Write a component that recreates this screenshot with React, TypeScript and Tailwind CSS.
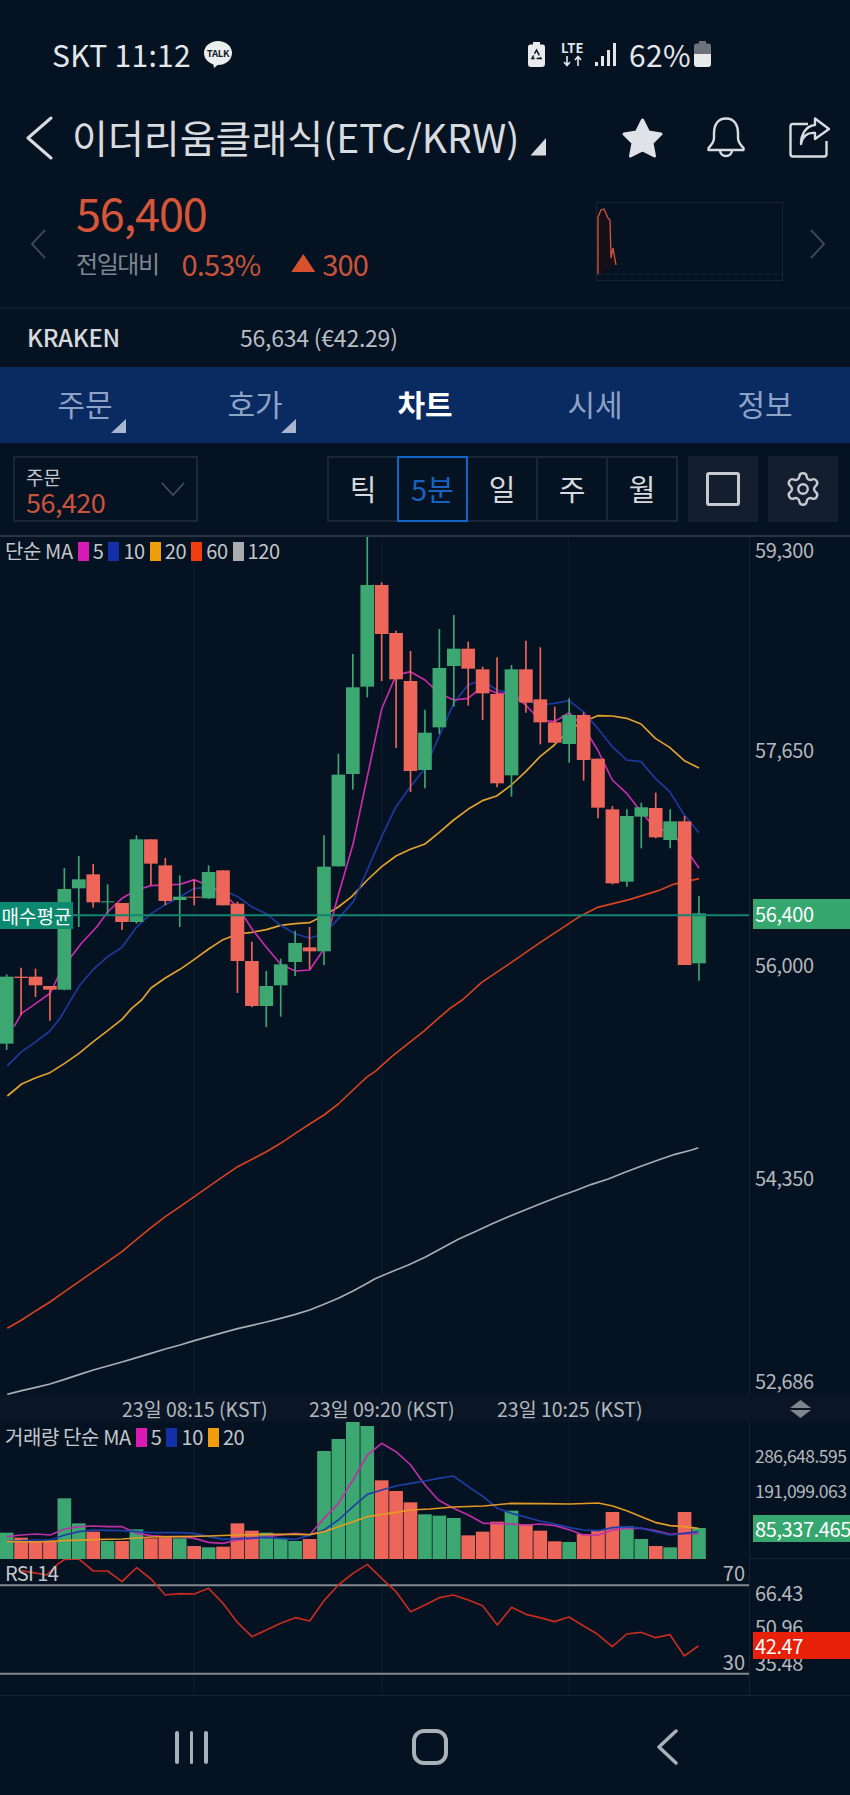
import { Settings } from "lucide-react";

const GREEN = "#3ca770";
const RED = "#ee6559";
const STEP = 43.27;

type Candle = [up: 0 | 1, top: number, bottom: number, high: number, low: number];

// chart units are 3 per pixel
const candles: Candle[] = [
  [1, 1340, 1541, 1333, 1560],
  [0, 1340, 1344, 1313, 1455],
  [0, 1340, 1366, 1316, 1401],
  [0, 1368, 1379, 1368, 1472],
  [1, 1077, 1379, 1014, 1381],
  [1, 1048, 1075, 978, 1191],
  [0, 1033, 1117, 1002, 1133],
  [1, 1114, 1117, 1063, 1151],
  [0, 1119, 1176, 1119, 1200],
  [1, 928, 1176, 916, 1181],
  [0, 928, 1001, 928, 1065],
  [0, 1006, 1113, 984, 1126],
  [1, 1100, 1110, 1036, 1191],
  [0, 1100, 1103, 1049, 1126],
  [1, 1026, 1105, 1006, 1107],
  [0, 1021, 1126, 1021, 1126],
  [0, 1121, 1293, 1115, 1389],
  [0, 1293, 1428, 1235, 1432],
  [1, 1368, 1428, 1323, 1491],
  [1, 1303, 1366, 1286, 1460],
  [1, 1239, 1296, 1202, 1338],
  [0, 1252, 1264, 1191, 1318],
  [1, 1010, 1264, 916, 1305],
  [1, 734, 1009, 671, 1010],
  [1, 472, 732, 372, 779],
  [1, 165, 470, 21, 502],
  [0, 165, 312, 157, 453],
  [0, 309, 448, 302, 654],
  [0, 453, 723, 363, 786],
  [1, 608, 720, 539, 775],
  [1, 414, 592, 297, 612],
  [1, 356, 408, 255, 530],
  [0, 356, 416, 335, 527],
  [0, 418, 490, 410, 570],
  [0, 492, 760, 382, 772],
  [1, 418, 736, 405, 800],
  [0, 418, 518, 332, 548],
  [0, 508, 577, 352, 643],
  [0, 577, 638, 530, 640],
  [1, 555, 642, 505, 698],
  [0, 555, 690, 547, 752],
  [0, 686, 833, 686, 865],
  [0, 838, 1060, 828, 1063],
  [1, 858, 1055, 838, 1070],
  [1, 832, 860, 818, 955],
  [0, 834, 922, 788, 925],
  [1, 874, 930, 838, 955],
  [0, 874, 1305, 858, 1305],
  [1, 1150, 1300, 1098, 1352],
];

const ma5 =
  "42,1490 65,1450 108,1420 151,1389 180,1328 215,1278 245,1239 290,1191 323,1146 366,1105 410,1080 453,1067 496,1065 540,1063 583,1049 626,1067 669,1090 713,1131 756,1197 799,1252 842,1303 886,1323 929,1320 972,1257 1015,1095 1059,943 1102,740 1145,537 1188,436 1231,425 1275,450 1317,490 1361,510 1404,505 1447,470 1490,490 1534,490 1577,525 1620,570 1663,575 1707,548 1750,590 1793,660 1837,750 1880,790 1923,845 1966,895 2009,905 2053,950 2097,1015";
const ma10 =
  "22,1607 65,1565 108,1535 150,1503 180,1465 237,1369 280,1318 323,1280 366,1252 410,1191 453,1151 496,1124 540,1100 583,1075 626,1073 669,1080 713,1100 756,1131 799,1151 842,1186 886,1212 929,1224 972,1212 1015,1166 1060,1115 1102,1020 1145,920 1188,830 1231,770 1275,715 1317,620 1361,520 1404,465 1447,450 1490,480 1534,490 1577,510 1620,525 1663,520 1707,512 1750,545 1793,595 1837,650 1880,690 1923,695 1966,745 2009,785 2053,855 2097,908";
const ma20 =
  "22,1698 65,1662 108,1643 150,1628 194,1600 237,1570 280,1535 323,1502 366,1468 395,1435 425,1410 453,1374 496,1344 540,1318 583,1288 626,1257 669,1229 713,1212 756,1207 799,1199 842,1186 886,1181 929,1178 972,1156 1015,1131 1055,1100 1102,1050 1145,1010 1188,978 1231,958 1275,942 1317,908 1361,870 1404,838 1447,812 1490,798 1534,765 1577,725 1620,680 1663,645 1707,600 1750,575 1793,557 1837,558 1880,565 1923,582 1966,625 2009,652 2053,692 2097,714";
const ma60 =
  "22,2395 65,2370 108,2342 150,2316 194,2285 237,2255 280,2225 323,2195 366,2165 410,2128 453,2093 496,2060 540,2030 583,2000 626,1970 669,1940 713,1910 756,1888 799,1865 842,1840 886,1810 929,1782 972,1755 1015,1722 1059,1680 1102,1640 1125,1625 1175,1580 1225,1540 1270,1505 1315,1465 1350,1435 1387,1410 1445,1357 1530,1300 1620,1238 1735,1162 1790,1133 1890,1108 1975,1082 2020,1063 2097,1046";
const ma120 =
  "22,2593 65,2582 108,2572 150,2562 194,2548 237,2534 280,2520 323,2508 366,2496 410,2483 453,2470 496,2457 540,2445 583,2432 626,2420 669,2408 713,2396 756,2386 799,2376 842,2365 886,2353 929,2340 972,2323 1015,2305 1059,2283 1102,2260 1125,2246 1175,2225 1225,2205 1275,2182 1325,2155 1375,2128 1425,2105 1475,2082 1525,2060 1575,2040 1625,2020 1675,2000 1725,1982 1775,1963 1825,1947 1875,1927 1925,1908 1975,1890 2025,1873 2075,1860 2095,1853";

const volumes: [0 | 1, number][] = [
  [1, 458], [0, 473], [0, 483], [0, 483], [1, 355], [1, 430], [0, 455], [1, 483], [0, 483], [1, 448],
  [0, 475], [0, 473], [1, 475], [0, 498], [1, 502], [0, 500], [0, 430], [0, 452], [1, 458], [1, 475],
  [1, 483], [0, 477], [1, 213], [1, 177], [1, 126], [1, 138], [0, 301], [0, 333], [0, 367], [1, 403],
  [1, 407], [1, 414], [0, 466], [0, 455], [0, 425], [1, 392], [0, 432], [0, 452], [0, 484], [1, 486],
  [0, 462], [0, 450], [0, 396], [1, 438], [1, 477], [0, 498], [1, 502], [0, 396], [1, 444],
];

const volMa5 =
  "20,470 64,465 108,462 151,465 194,447 237,440 280,438 323,440 366,440 410,460 453,467 496,470 540,470 583,475 626,487 669,490 713,480 756,476 799,470 842,465 886,460 929,465 972,415 1015,370 1059,300 1102,225 1145,190 1188,215 1232,255 1275,315 1315,360 1360,385 1405,405 1450,430 1492,430 1535,432 1580,435 1620,432 1665,437 1710,450 1750,465 1795,465 1838,450 1880,445 1925,445 1965,452 2010,463 2053,460 2095,462";
const volMa10 =
  "20,483 64,482 108,480 151,480 194,465 237,455 280,450 323,451 366,452 410,455 453,458 496,458 540,458 583,460 626,470 669,478 713,476 756,474 799,472 842,475 886,478 929,466 972,450 1015,420 1059,380 1102,343 1145,330 1188,318 1232,310 1275,303 1315,295 1360,288 1405,320 1450,350 1492,385 1535,400 1580,412 1620,423 1665,432 1710,443 1750,450 1795,452 1838,443 1880,440 1925,445 1965,455 2010,465 2053,460 2095,455";
const volMa20 =
  "20,484 108,486 194,482 280,479 366,477 453,471 540,470 626,468 713,465 799,463 886,463 929,464 972,455 1059,425 1102,410 1188,397 1232,390 1290,387 1360,381 1450,378 1535,370 1620,371 1710,372 1795,369 1838,378 1880,392 1965,427 2010,437 2053,440 2095,445";

const rsi =
  "64,572 100,578 140,585 170,555 194,538 237,537 280,573 323,573 366,605 410,563 453,597 496,645 540,641 583,642 626,625 669,670 713,728 756,770 799,750 842,730 886,713 929,723 972,662 1015,615 1059,580 1102,553 1145,595 1188,635 1232,695 1275,675 1318,653 1360,645 1405,660 1448,677 1492,735 1535,682 1578,703 1620,713 1663,725 1707,711 1750,737 1793,763 1837,800 1880,762 1923,757 1967,773 2010,764 2053,828 2095,798";

const gridX = [582, 1146, 1707];

function Line({ points, color, width = 5 }: { points: string; color: string; width?: number }) {
  return <polyline points={points} fill="none" stroke={color} strokeWidth={width} strokeLinejoin="round" />;
}

function Grid({ y1, y2 }: { y1: number; y2: number }) {
  return (
    <>
      {gridX.map((x) => (
        <line key={x} x1={x} x2={x} y1={y1} y2={y2} stroke="#0f1c2d" strokeWidth={3} />
      ))}
    </>
  );
}

function PriceChart() {
  return (
    <svg width={749} height={858} viewBox="0 21 2247 2574" className="block">
      <Grid y1={21} y2={2595} />
      <Line points={ma120} color="#a9adb2" />
      <Line points={ma60} color="#d8431f" />
      <Line points={ma20} color="#e2a32e" />
      <Line points={ma10} color="#1c3aa0" />
      <Line points={ma5} color="#cc2bae" />
      {candles.map(([up, top, bottom, high, low], i) => {
        const x = 20 + STEP * i;
        const color = up ? GREEN : RED;
        return (
          <g key={i}>
            <line x1={x} x2={x} y1={high} y2={low} stroke={color} strokeWidth={5} />
            <rect x={x - 20.5} y={top} width={41} height={bottom - top} fill={color} />
          </g>
        );
      })}
      <line x1={0} x2={2247} y1={1156} y2={1156} stroke="#128470" strokeWidth={6} />
    </svg>
  );
}

function VolumeChart() {
  return (
    <svg width={749} height={137} viewBox="0 126 2247 411" className="block">
      <Grid y1={126} y2={537} />
      {volumes.map(([up, top], i) => (
        <rect key={i} x={20 + STEP * i - 20.5} y={top} width={41} height={537 - top} fill={up ? GREEN : RED} />
      ))}
      <Line points={volMa5} color="#bd2fa8" width={5} />
      <Line points={volMa10} color="#1c3fa8" width={5} />
      <Line points={volMa20} color="#e39a24" width={5} />
    </svg>
  );
}

function RsiChart() {
  return (
    <svg width={749} height={136} viewBox="0 537 2247 408" className="block">
      <Grid y1={537} y2={945} />
      <line x1={0} x2={2247} y1={616} y2={616} stroke="#85898f" strokeWidth={6} />
      <line x1={0} x2={2247} y1={881} y2={881} stroke="#85898f" strokeWidth={6} />
      <Line points={rsi} color="#c62c1f" width={5} />
    </svg>
  );
}

function Legend({ title, items }: { title: string; items: [string, string][] }) {
  return (
    <div className="flex items-center text-[20px] leading-[20px] tracking-[-0.02em] text-[#c3c7cc]">
      <span>{title}</span>
      {items.map(([color, label]) => (
        <span key={label} className="flex items-center">
          <span className="ml-[5px] h-[19px] w-[11px]" style={{ backgroundColor: color }} />
          <span className="ml-[4px]">{label}</span>
        </span>
      ))}
    </div>
  );
}

function AxisLabel({ y, children }: { y: number; children: string }) {
  return (
    <span
      className="absolute left-[5px] -translate-y-1/2 text-[20px] leading-none tracking-[-0.02em] text-[#b4b8be]"
      style={{ top: y }}
    >
      {children}
    </span>
  );
}

function StatusBar() {
  return (
    <div className="flex h-[90px] items-center pl-[52px] pt-[18px] text-[30px] leading-none tracking-[0.01em] text-[#e4e6e9]">
      <span>SKT 11:12</span>
      <svg width={28} height={27} viewBox="0 0 28 27" className="ml-[13px]">
        <ellipse cx={14} cy={12} rx={14} ry={12} fill="#eceded" />
        <path d="M9 21 L10 27 L16 22 Z" fill="#eceded" />
        <text x={14} y={15.5} textAnchor="middle" fontSize={9.5} fontWeight={700} letterSpacing={-0.3} fill="#111b28">
          TALK
        </text>
      </svg>
      <svg width={17} height={25} viewBox="0 0 17 25" className="ml-[296px]">
        <path d="M5 0 H12 V2.5 H14.5 Q17 2.5 17 5 V22 Q17 25 14 25 H3 Q0 25 0 22 V5 Q0 2.5 2.5 2.5 H5 Z" fill="#e8eaec" />
        <polygon points="8.5,8 13,16.5 4,16.5" fill="none" stroke="#0b1522" strokeWidth={1.5} strokeDasharray="6 2" />
      </svg>
      <svg width={25} height={25} viewBox="0 0 25 25" className="ml-[15px]">
        <text x={12.5} y={11} textAnchor="middle" fontSize={13} fontWeight={700} fill="#e4e6e9">
          LTE
        </text>
        <path d="M7 14 V23 M4 20 L7 23.5 L10 20 M18 24 V15 M15 18 L18 14.5 L21 18" fill="none" stroke="#e4e6e9" strokeWidth={1.6} />
      </svg>
      <svg width={22} height={23} viewBox="0 0 22 23" className="ml-[10px]">
        <rect x={0} y={19} width={3} height={4} fill="#e4e6e9" />
        <rect x={6} y={13} width={3} height={10} fill="#e4e6e9" />
        <rect x={12} y={7} width={3} height={16} fill="#e4e6e9" />
        <rect x={18} y={0} width={3} height={23} fill="#e4e6e9" />
      </svg>
      <span className="ml-[12px]">62%</span>
      <svg width={17} height={26} viewBox="0 0 17 26" className="ml-[3px]">
        <path d="M5 0 H12 V2.5 H14.5 Q17 2.5 17 5 V13 H0 V5 Q0 2.5 2.5 2.5 H5 Z" fill="#6b727b" />
        <path d="M0 13 H17 V23 Q17 26 14 26 H3 Q0 26 0 23 Z" fill="#e8eaec" />
      </svg>
    </div>
  );
}

function TitleBar() {
  return (
    <div className="flex h-[95px] items-center text-[#d8dbdf]">
      <svg width={30} height={44} viewBox="0 0 30 44" className="ml-[25px]">
        <path d="M26 2 L3 22 L26 42" fill="none" stroke="currentColor" strokeWidth={3} strokeLinecap="round" strokeLinejoin="round" />
      </svg>
      <h1 className="ml-[17px] -translate-y-[1px] whitespace-nowrap text-[39px] font-normal leading-none">이더리움클래식(ETC/KRW)</h1>
      <span className="ml-[11px] mt-[18px] h-[18px] w-[16px] bg-[#d8dbdf] [clip-path:polygon(100%_0,100%_100%,0_100%)]" />
      <svg width={44} height={42} viewBox="0 0 44 42" className="ml-[75px]">
        <polygon
          points="21.5,3 27.5,15 40,17 31,26 33.5,39 21.5,33 9.5,39 12,26 3,17 15.5,15"
          fill="#dfe2e6"
          stroke="#dfe2e6"
          strokeWidth={3}
          strokeLinejoin="round"
        />
      </svg>
      <svg width={38} height={42} viewBox="0 0 38 42" className="ml-[42px]">
        <path
          d="M19 1.5 C10 1.5 7 9 7 16 V21 C7 26 3 29 1.5 31 V33 H36.5 V31 C35 29 31 26 31 21 V16 C31 9 28 1.5 19 1.5 Z M13 33 C13 41 25 41 25 33"
          fill="none"
          stroke="currentColor"
          strokeWidth={2.4}
          strokeLinejoin="round"
        />
      </svg>
      <svg width={42} height={41} viewBox="0 0 42 41" className="ml-[44px]">
        <path
          d="M19 7 H4 Q1.5 7 1.5 9.5 V37 Q1.5 39.5 4 39.5 H35 Q37.5 39.5 37.5 37 V24 M26 1.5 L40 12 L26 22 V16 C18 15 13 20 12 27 C12 17 17 9 26 8 Z"
          fill="none"
          stroke="currentColor"
          strokeWidth={2.4}
          strokeLinejoin="round"
        />
      </svg>
    </div>
  );
}

function PriceSummary() {
  return (
    <div className="flex h-[124px] items-start border-b-2 border-[#111e2f]">
      <svg width={16} height={30} viewBox="0 0 16 30" className="ml-[30px] mt-[44px]">
        <path d="M15 1 L2 15 L15 29" fill="none" stroke="#3a4656" strokeWidth={2} />
      </svg>
      <div className="ml-[30px] flex w-[520px] flex-col">
        <span className="mt-[1px] text-[45px] leading-[52px] tracking-[-0.025em] text-[#d7563a]">56,400</span>
        <div className="mt-[10px] flex items-center leading-[30px]">
          <span className="text-[24px] tracking-[-0.06em] text-[#7d8793]">전일대비</span>
          <span className="ml-[23px] text-[29px] tracking-[-0.03em] text-[#c9543b]">0.53%</span>
          <span className="ml-[31px] h-[18px] w-[24px] bg-[#d9502f] [clip-path:polygon(50%_0,100%_100%,0_100%)]" />
          <span className="ml-[7px] text-[29px] tracking-[-0.03em] text-[#c9543b]">300</span>
        </div>
      </div>
      <div className="mt-[17px] h-[79px] w-[187px] border border-[#172232]">
        <svg width={185} height={77} viewBox="0 0 185 77" className="block">
          <path d="M0 71.5 H185" stroke="#1d2a3a" strokeWidth={1} strokeDasharray="4 4" />
          <path d="M1 71 L1 14 L4 7 L7 6 L11 15 L13 17 L14 55 L16 45 L19 62" fill="#160f18" stroke="#d7563a" strokeWidth={1.3} />
        </svg>
      </div>
      <svg width={16} height={30} viewBox="0 0 16 30" className="ml-[27px] mt-[44px]">
        <path d="M1 1 L14 15 L1 29" fill="none" stroke="#3a4656" strokeWidth={2} />
      </svg>
    </div>
  );
}

function Tabs() {
  const tabs = [
    { label: "주문", corner: true },
    { label: "호가", corner: true },
    { label: "차트", active: true },
    { label: "시세" },
    { label: "정보" },
  ];
  return (
    <nav className="grid h-[76px] grid-cols-5 bg-[#0a2a62]">
      {tabs.map((tab) => (
        <div key={tab.label} className="relative flex items-center justify-center pb-[4px]">
          <span className={tab.active ? "text-[30px] font-bold text-white" : "text-[30px] text-[#8ea2c6]"}>{tab.label}</span>
          {tab.corner && (
            <span className="absolute left-[111px] top-[52px] h-[14px] w-[15px] bg-[#a9b6cf] [clip-path:polygon(100%_0,100%_100%,0_100%)]" />
          )}
        </div>
      ))}
    </nav>
  );
}

function Toolbar() {
  const ranges = ["틱", "5분", "일", "주", "월"];
  return (
    <div className="flex h-[92px] items-center pl-[13px]">
      <div className="flex h-[66px] w-[185px] items-center justify-between border-2 border-[#1c2735] pl-[11px] pr-[11px]">
        <div className="flex flex-col pt-[5px]">
          <span className="text-[19px] leading-[20px] text-[#c3c7cc]">주문</span>
          <span className="text-[27px] leading-[30px] tracking-[-0.02em] text-[#c9543b]">56,420</span>
        </div>
        <svg width={24} height={14} viewBox="0 0 24 14">
          <path d="M1 1 L12 13 L23 1" fill="none" stroke="#47525f" strokeWidth={1.6} />
        </svg>
      </div>
      <div className="ml-[129px] flex h-[66px] w-[351px] border-2 border-[#1c2735]">
        {ranges.map((range, i) => (
          <div
            key={range}
            className={
              range === "5분"
                ? "-my-[2px] flex w-[71px] items-center justify-center border-2 border-[#1565c8] text-[29px] text-[#1a62c2]"
                : i === 0
                  ? "flex w-[68px] items-center justify-center text-[29px] text-[#d6d9dd]"
                  : "flex flex-1 items-center justify-center border-r-2 border-[#1c2735] text-[29px] text-[#d6d9dd] last:border-r-0"
            }
          >
            {range}
          </div>
        ))}
      </div>
      <div className="ml-[10px] flex h-[66px] w-[70px] items-center justify-center bg-[#131f2f]">
        <div className="h-[34px] w-[34px] rounded-[3px] border-[3px] border-[#c6cacf]" />
      </div>
      <div className="ml-[10px] flex h-[66px] w-[70px] items-center justify-center bg-[#131f2f]">
        <Settings size={38} strokeWidth={1.5} className="text-[#c6cacf]" />
      </div>
    </div>
  );
}

function NavBar() {
  return (
    <div className="grid h-[100px] grid-cols-[381px_246px_1fr] border-t border-[#13233a] pt-[33px] text-[#aab0b7]">
      <div className="flex h-[36px] items-center gap-[11px] pl-[175px]">
        <span className="h-[33px] w-[3.5px] rounded-full bg-current" />
        <span className="h-[33px] w-[3.5px] rounded-full bg-current" />
        <span className="h-[33px] w-[3.5px] rounded-full bg-current" />
      </div>
      <div className="pl-[31px]">
        <div className="h-[36px] w-[36px] rounded-[12px] border-[4px] border-current" />
      </div>
      <svg width={22} height={36} viewBox="0 0 22 36" className="ml-[29px]">
        <path d="M20 2 L3 18 L20 34" fill="none" stroke="currentColor" strokeWidth={3.5} strokeLinecap="round" strokeLinejoin="round" />
      </svg>
    </div>
  );
}

export default function App() {
  return (
    <div className="h-[1795px] w-[850px] overflow-hidden bg-[#051221] font-['Noto_Sans_CJK_KR',sans-serif]">
      <StatusBar />
      <TitleBar />
      <PriceSummary />

      <div className="flex h-[58px] items-center pb-[2px]">
        <span className="ml-[27px] w-[213px] text-[24px] font-medium tracking-[-0.01em] text-[#d5d8dc]">KRAKEN</span>
        <span className="text-[23px] tracking-[-0.01em] text-[#b9bec5]">56,634 (€42.29)</span>
      </div>

      <Tabs />
      <Toolbar />

      <div className="h-[2px] bg-[#2a3442]" />

      {/* price panel */}
      <section className="flex h-[858px]">
        <div className="relative w-[749px]">
          <PriceChart />
          <div className="absolute left-[5px] top-[4px]">
            <Legend
              title="단순 MA"
              items={[
                ["#d91ab4", "5"],
                ["#1430a8", "10"],
                ["#ef9d0a", "20"],
                ["#f23d0c", "60"],
                ["#a9adb2", "120"],
              ]}
            />
          </div>
          <span className="absolute left-0 top-[365px] flex h-[27px] w-[73px] items-center justify-center bg-[#0b8a70] text-[19px] leading-none text-white">
            매수평균
          </span>
        </div>
        <aside className="relative flex-1 border-l border-[#162232]">
          <AxisLabel y={13}>59,300</AxisLabel>
          <AxisLabel y={213}>57,650</AxisLabel>
          <span className="absolute left-[3px] right-0 top-[362px] flex h-[30px] items-center bg-[#35a76f] pl-[2px] text-[20px] leading-none tracking-[-0.02em] text-white">
            56,400
          </span>
          <AxisLabel y={428}>56,000</AxisLabel>
          <AxisLabel y={641}>54,350</AxisLabel>
          <AxisLabel y={844}>52,686</AxisLabel>
        </aside>
      </section>

      {/* time axis */}
      <div className="flex h-[27px] items-center bg-[#0a1626] pl-[122px] text-[19.5px] leading-none text-[#b4b8be]">
        <span className="w-[187px] whitespace-nowrap">23일 08:15 (KST)</span>
        <span className="w-[188px] whitespace-nowrap">23일 09:20 (KST)</span>
        <span className="w-[293px] whitespace-nowrap">23일 10:25 (KST)</span>
        <svg width={21} height={18} viewBox="0 0 21 18">
          <path d="M10.5 0 L21 8 H0 Z M0 10 H21 L10.5 18 Z" fill="#7f858c" />
        </svg>
      </div>

      {/* volume panel */}
      <section className="flex h-[137px]">
        <div className="relative w-[749px]">
          <VolumeChart />
          <div className="absolute left-[5px] top-[5px]">
            <Legend
              title="거래량 단순 MA"
              items={[
                ["#d91ab4", "5"],
                ["#1430a8", "10"],
                ["#ef9d0a", "20"],
              ]}
            />
          </div>
        </div>
        <aside className="relative flex-1 border-b border-l border-[#162232]">
          <span className="absolute left-[5px] top-[25px] text-[17.5px] leading-[18px] tracking-[-0.03em] text-[#b4b8be]">286,648.595</span>
          <span className="absolute left-[5px] top-[60px] text-[17.5px] leading-[18px] tracking-[-0.03em] text-[#b4b8be]">191,099.063</span>
          <span className="absolute left-[3px] right-0 top-[93px] flex h-[27px] items-center overflow-hidden whitespace-nowrap bg-[#35a76f] pl-[2px] text-[20px] leading-none tracking-[-0.02em] text-white">
            85,337.465
          </span>
        </aside>
      </section>

      {/* rsi panel */}
      <section className="flex h-[136px]">
        <div className="relative w-[749px]">
          <RsiChart />
          <span className="absolute left-[5px] top-[4px] text-[20px] leading-[20px] tracking-[-0.03em] text-[#c3c7cc]">RSI 14</span>
          <span className="absolute right-[4px] top-[4px] text-[20px] leading-[20px] text-[#b4b8be]">70</span>
          <span className="absolute right-[4px] top-[93px] text-[20px] leading-[20px] text-[#b4b8be]">30</span>
        </div>
        <aside className="relative flex-1 border-l border-[#162232]">
          <AxisLabel y={34}>66.43</AxisLabel>
          <AxisLabel y={68}>50.96</AxisLabel>
          <AxisLabel y={104}>35.48</AxisLabel>
          <span className="absolute left-[3px] right-0 top-[73px] flex h-[27px] items-center bg-[#e8200a] pl-[2px] text-[20px] leading-none tracking-[-0.02em] text-white">
            42.47
          </span>
        </aside>
      </section>

      <NavBar />
    </div>
  );
}
